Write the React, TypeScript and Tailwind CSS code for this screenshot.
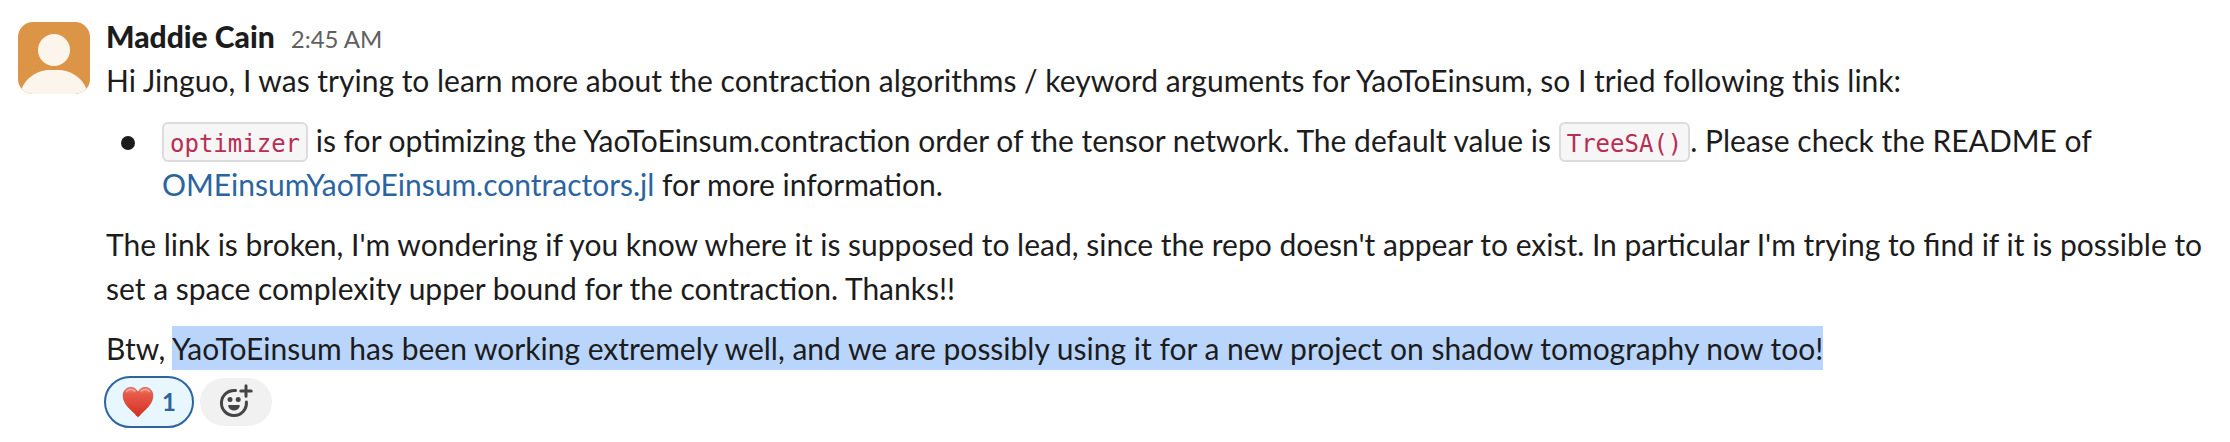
import type { ReactNode } from "react";

function Code({ children }: { children: ReactNode }) {
  return (
    <code className="rounded-md border-2 border-[#dcdcdc] bg-[#f6f6f6] px-1.5 pt-1.5 pb-0.5 font-['DejaVu_Sans_Mono',monospace] text-2xl leading-none text-[#b92d52]">
      {children}
    </code>
  );
}

function Avatar() {
  return (
    <svg className="mt-2 size-[72px] shrink-0" viewBox="0 0 72 72" role="img" aria-label="Maddie Cain">
      <defs>
        <clipPath id="avatar">
          <rect width="72" height="72" rx="15" />
        </clipPath>
      </defs>
      <g clipPath="url(#avatar)">
        <rect width="72" height="72" fill="#dc9547" />
        <circle cx="36" cy="28" r="16" fill="#fcf5ec" />
        <path d="M2 72C5 57 19 48 31 48H41C53 48 67 57 70 72Z" fill="#fcf5ec" />
      </g>
    </svg>
  );
}

function Heart() {
  return (
    <svg className="size-8" viewBox="0 0 32 32" aria-hidden="true">
      <defs>
        <linearGradient id="heart" x1="0" y1="0" x2="0" y2="1">
          <stop offset="0" stopColor="#f0907e" />
          <stop offset="0.22" stopColor="#e75a48" />
          <stop offset="0.6" stopColor="#df4636" />
          <stop offset="1" stopColor="#cf2f20" />
        </linearGradient>
      </defs>
      <path
        d="M16 30.800C15.200 30.800 14.500 29.500 13 27.800C9 23.500 1.200 18.500 1.200 9.500C1.200 4.800 4.600 1.500 8.800 1.500C12.200 1.500 14.800 3.600 16 6.600C17.200 3.600 19.800 1.500 23.200 1.500C27.400 1.500 30.800 4.800 30.800 9.500C30.800 18.500 23 23.500 19 27.800C17.500 29.500 16.800 30.800 16 30.800Z"
        fill="url(#heart)"
        stroke="#c4382c"
        strokeWidth="0.7"
      />
      <path d="M4.500 5.500C6.500 3 10.500 2.800 12.800 5.200M19.200 5.200C21.500 2.800 25.500 3 27.500 5.500" fill="none" stroke="#f8c4ba" strokeWidth="1.200" strokeLinecap="round" opacity="0.8" />
    </svg>
  );
}

function AddReaction() {
  return (
    <svg className="size-9" viewBox="0 0 36 36" fill="none" stroke="#454447" strokeWidth="3" strokeLinecap="round" aria-hidden="true">
      <path d="M17.500 6.600A12.500 12.500 0 1 0 28.400 18" />
      <path d="M28 1.800V12.200M22.800 7H33.200" />
      <circle cx="12" cy="15.500" r="2.500" fill="#454447" stroke="none" />
      <circle cx="20.200" cy="15.500" r="2.500" fill="#454447" stroke="none" />
      <path d="M11 21H21Q22 21 21.700 22.200C20.200 28 11.800 28 10.300 22.200Q10 21 11 21Z" fill="#454447" stroke="none" />
    </svg>
  );
}

export default function App() {
  return (
    <main className="flex min-h-screen gap-4 bg-white pt-3.5 pr-4 pl-[18px] font-['Lato',sans-serif] text-[30px] leading-[44px] text-[#1d1c1d]">
      <Avatar />
      <article className="min-w-0 flex-1">
        <header className="flex items-baseline gap-4">
          <h1 className="font-black">Maddie Cain</h1>
          <time className="text-2xl leading-8 text-[#616061]">2:45 AM</time>
        </header>
        <div className="flex flex-col gap-4">
          <p>
            Hi Jinguo, I was trying to learn more about the contraction algorithms / keyword arguments for YaoToEinsum, so I tried
            following this link:
          </p>
          <ul>
            <li className="flex">
              <span className="mt-[18px] mr-[27px] ml-[15px] size-3.5 shrink-0 rounded-full bg-[#1d1c1d]" />
              <p>
                <Code>optimizer</Code> is for optimizing the YaoToEinsum.contraction order of the tensor network. The default value is{" "}
                <Code>TreeSA()</Code>. Please check the README of{" "}
                <a href="#contractors" className="text-[#2b64a1]">
                  OMEinsumYaoToEinsum.contractors.jl
                </a>{" "}
                for more information.
              </p>
            </li>
          </ul>
          <p>
            The link is broken, I'm wondering if you know where it is supposed to lead, since the repo doesn't appear to exist. In
            particular I'm trying to find if it is possible to set a space complexity upper bound for the contraction. Thanks!!
          </p>
          <p>
            Btw,{" "}
            <mark className="bg-[#b9d5fb] py-1 text-inherit">
              YaoToEinsum has been working extremely well, and we are possibly using it for a new project on shadow tomography now too!
            </mark>
          </p>
        </div>
        <div className="mt-1.5 -ml-0.5 flex items-center gap-1.5">
          <button
            type="button"
            aria-label="Red heart, 1 reaction"
            className="flex h-[52px] items-center gap-2 rounded-full border-2 border-[#2b64a1] bg-[#e8f7fe] px-4 text-2xl font-bold text-[#2b64a1]"
          >
            <Heart />
            <span>1</span>
          </button>
          <button type="button" aria-label="Add reaction" className="flex h-12 w-[72px] items-center justify-center rounded-full bg-[#f1f1f1]">
            <AddReaction />
          </button>
        </div>
      </article>
    </main>
  );
}
